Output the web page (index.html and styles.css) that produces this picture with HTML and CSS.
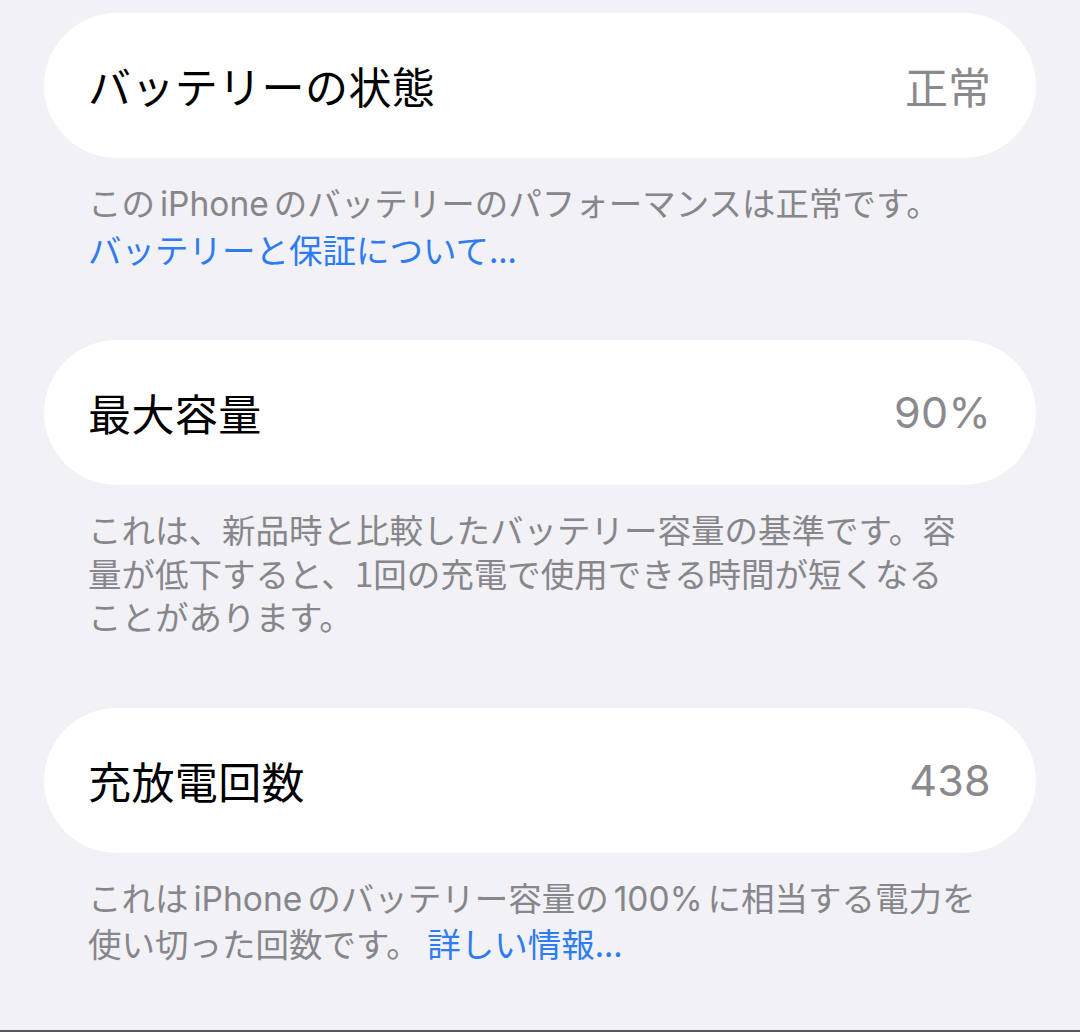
FILE: index.html
```html
<!DOCTYPE html>
<html lang="ja">
<head>
<meta charset="utf-8">
<link rel="stylesheet" href="styles.css">
</head>
<body>
<main class="page">
  <section class="group">
    <div class="cell"><span class="label">バッテリーの状態</span><span class="value">正常</span></div>
    <p class="footer">この<span class="lat">iPhone</span>のバッテリーのパフォーマンスは正常です。<br><a class="link">バッテリーと保証について...</a></p>
  </section>
  <section class="group">
    <div class="cell"><span class="label">最大容量</span><span class="value num">90%</span></div>
    <p class="footer">これは、新品時と比較したバッテリー容量の基準です。容<br>量が低下すると、1回の充電で使用できる時間が短くなる<br>ことがあります。</p>
  </section>
  <section class="group">
    <div class="cell"><span class="label">充放電回数</span><span class="value num">438</span></div>
    <p class="footer">これは<span class="lat">iPhone</span>のバッテリー容量の<span class="lat">100%</span>に相当する電力を<br>使い切った回数です。 <a class="link">詳しい情報...</a></p>
  </section>
</main>
<div class="bottom-bar"></div>
</body>
</html>
```
FILE: styles.css
```css
html, body {
  margin: 0;
  padding: 0;
  background: #f1f1f6;
}
body {
  width: 1080px;
  height: 1032px;
  overflow: hidden;
  position: relative;
  font-family: "Noto Sans CJK JP", "Noto Sans", sans-serif;
}
.page {
  padding: 13px 44px 0 44px;
  display: flex;
  flex-direction: column;
}
.group {
  display: flex;
  flex-direction: column;
  margin-bottom: 70px;
}
.cell {
  height: 145px;
  background: #ffffff;
  border-radius: 73px;
  display: flex;
  align-items: center;
  justify-content: space-between;
  padding: 0 45px 0 44px;
}
.label {
  font-size: 43px;
  color: #000;
  line-height: 1;
  letter-spacing: 0.4px;
}
.value {
  font-size: 43px;
  color: #8a8a8e;
  line-height: 1;
}
.value.num {
  font-family: Inter, "Noto Sans CJK JP", sans-serif;
  font-size: 43px;
  letter-spacing: 0.3px;
}
.lat {
  font-family: Inter, "Noto Sans CJK JP", sans-serif;
  padding: 0 5px;
}
.footer {
  margin: 0;
  padding: 22px 44px 0 44px;
  font-size: 33.5px;
  line-height: 43.5px;
  color: #86868b;
  white-space: nowrap;
}
.link {
  color: #2f7cf0;
}
.bottom-bar {
  position: absolute;
  left: 0;
  right: 0;
  bottom: 0;
  height: 2px;
  background: #56565b;
}
```
